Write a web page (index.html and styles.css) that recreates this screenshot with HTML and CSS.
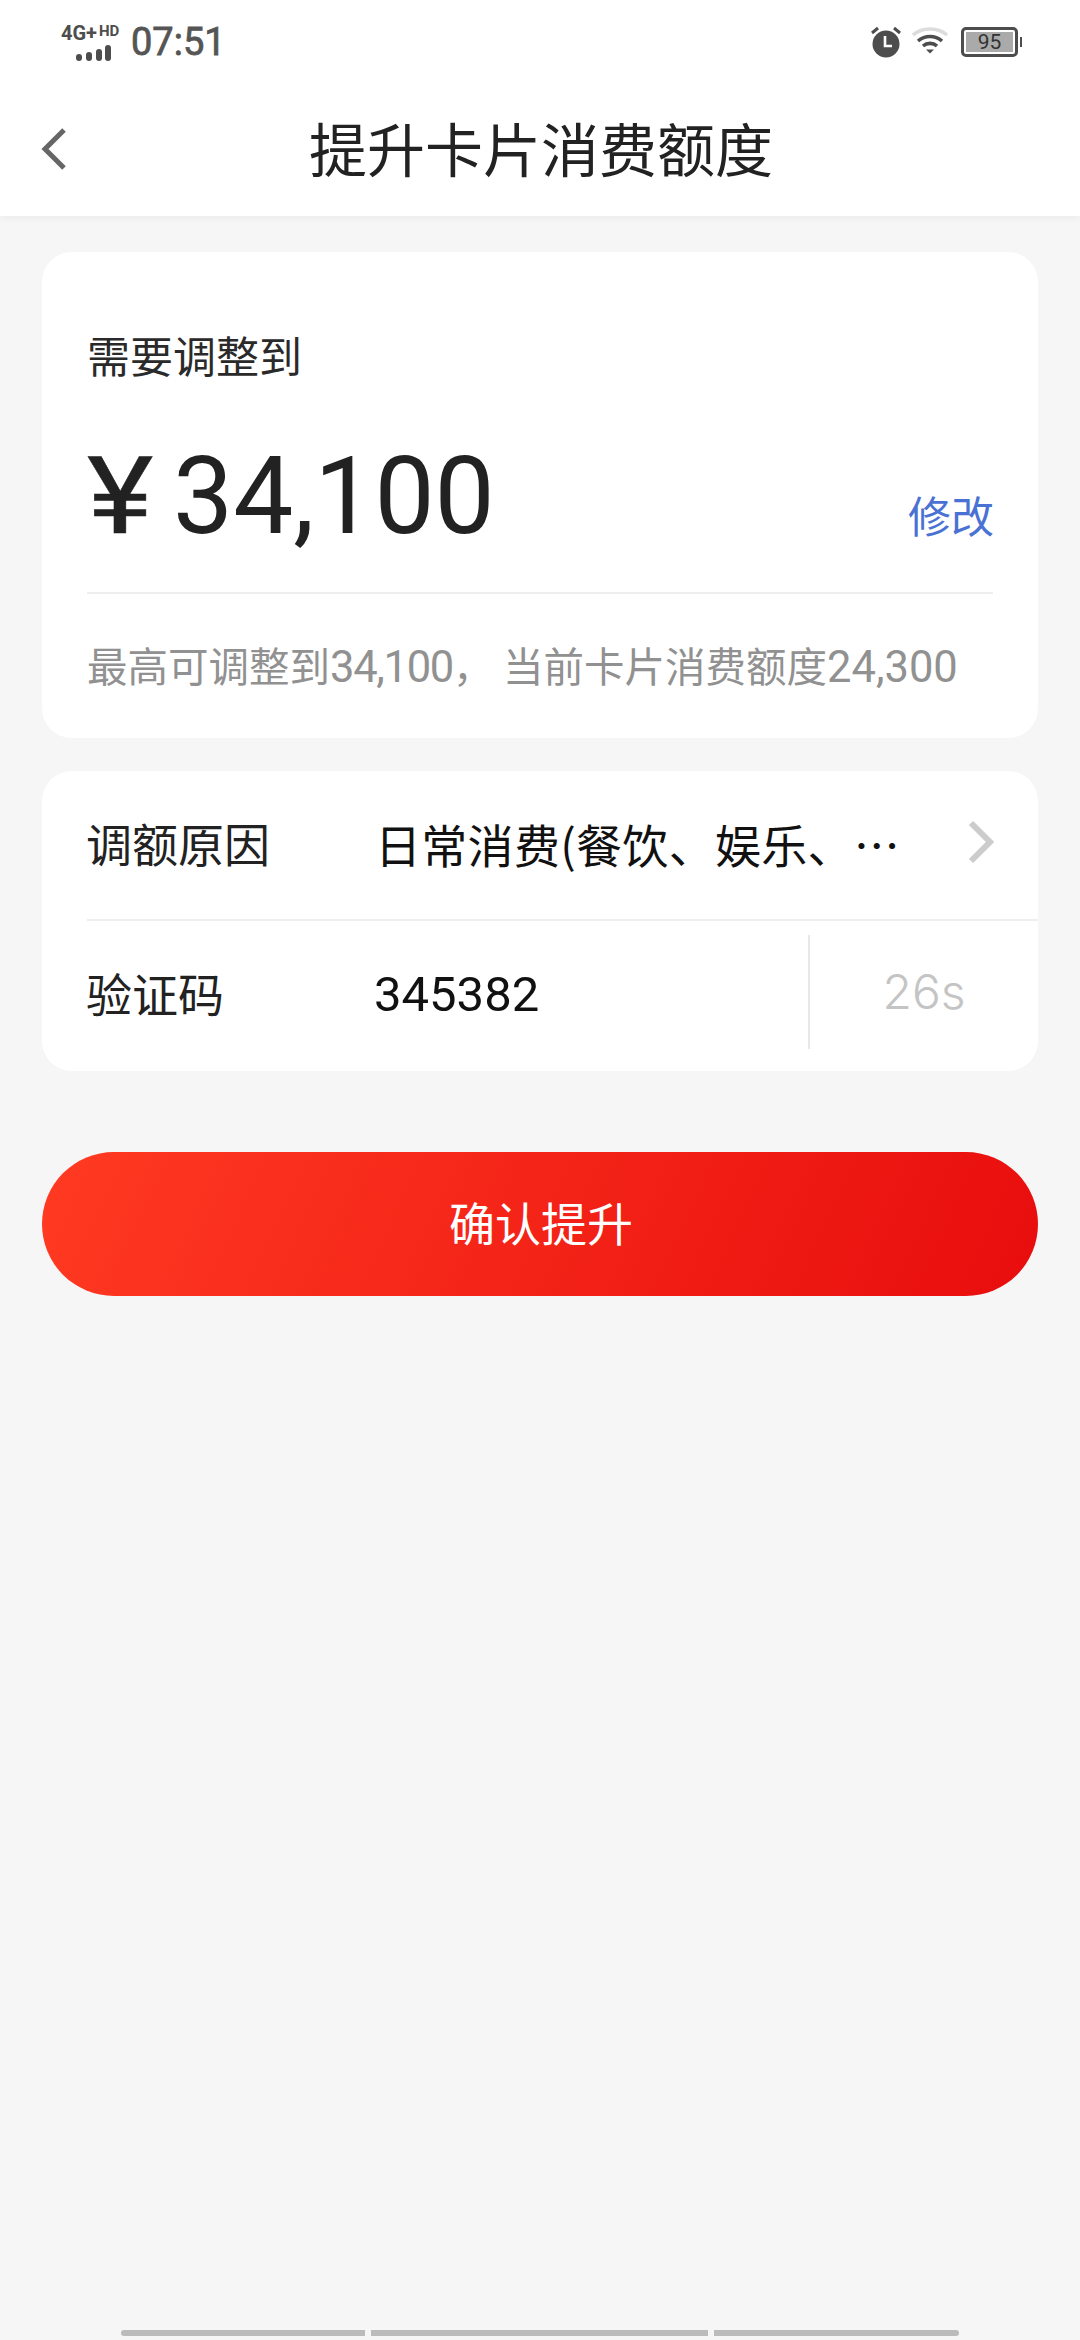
FILE: index.html
```html
<!DOCTYPE html>
<html lang="zh-CN">
<head>
<meta charset="utf-8">
<title>提升卡片消费额度</title>
<link rel="stylesheet" href="styles.css">
</head>
<body>
<header class="top">
  <div class="status">
    <div class="status-left">
      <div class="net">
        <div class="net-text"><span class="net-4g">4G+</span><span class="net-hd">HD</span></div>
        <svg class="signal" width="36" height="16" viewBox="0 0 36 16"><rect x="0" y="9" width="6" height="7" rx="3"/><rect x="10" y="7" width="6" height="9" rx="3"/><rect x="20" y="4" width="6" height="12" rx="3"/><rect x="29" y="0" width="6" height="16" rx="3"/></svg>
      </div>
      <span class="time">07:51</span>
    </div>
    <div class="status-right">
      <svg class="alarm" width="32" height="32" viewBox="0 0 32 32"><circle cx="16" cy="18" r="13.500" fill="#4d4d4d"/><path d="M2 7l6-5M30 7l-6-5" stroke="#4d4d4d" stroke-width="3" fill="none"/><path d="M15 10v10h7" stroke="#fff" stroke-width="2.600" fill="none"/></svg>
      <svg class="wifi" width="36" height="28" viewBox="0 0 36 28"><path d="M1 9C10 1 26 1 35 9" stroke="#dcdcdc" stroke-width="3.400" fill="none"/><path d="M6 15c7-6 17-6 24 0" stroke="#4d4d4d" stroke-width="3.600" fill="none"/><path d="M11 20c4-3.500 10-3.500 14 0" stroke="#4d4d4d" stroke-width="3.600" fill="none"/><path d="M14 23.500h8l-4 4z" fill="#4d4d4d"/></svg>
      <div class="battery"><div class="battery-body"><span class="battery-fill">95</span></div><span class="battery-tip"></span></div>
    </div>
  </div>
  <nav class="nav">
    <svg class="back" width="26" height="44" viewBox="0 0 26 44"><path d="M23 3L4 22l19 19" stroke="#666" stroke-width="5" fill="none"/></svg>
    <h1 class="title">提升卡片消费额度</h1>
  </nav>
</header>
<main class="content">
  <section class="card amount-card">
    <div class="label">需要调整到</div>
    <div class="amount-row">
      <div class="amount"><span class="yen">¥</span><span class="num">34,100</span></div>
      <a class="edit">修改</a>
    </div>
    <div class="hint">最高可调整到<span class="digits digits-tight">34,100</span><span class="comma">，</span><span class="rest">当前卡片消费额度<span class="digits">24,300</span></span></div>
  </section>
  <section class="card form-card">
    <div class="row row-reason">
      <span class="row-label">调额原因</span>
      <span class="row-value">日常消费(餐饮、娱乐、⋯</span>
      <svg class="chevron" width="28" height="44" viewBox="0 0 28 44"><path d="M4 3l19 19L4 41" stroke="#ccc" stroke-width="6" fill="none"/></svg>
    </div>
    <div class="row row-code">
      <span class="row-label">验证码</span>
      <span class="code">345382</span>
      <span class="timer">26s</span>
    </div>
  </section>
  <button class="submit">确认提升</button>
</main>
<footer class="gesture">
  <span class="bar bar-a"></span><span class="bar bar-b"></span><span class="bar bar-c"></span>
</footer>
</body>
</html>
```
FILE: styles.css
```css
* { box-sizing: border-box; }
html, body { margin: 0; padding: 0; }
body {
  width: 1080px;
  height: 2340px;
  background: #f6f6f6;
  font-family: Roboto, "Noto Sans CJK SC", sans-serif;
  color: #222;
  display: flex;
  flex-direction: column;
  overflow: hidden;
}
.top {
  height: 216px;
  background: #fff;
  box-shadow: 0 3px 6px rgba(0,0,0,.04);
}
.status {
  height: 84px;
  padding: 0 58px 0 63px;
  display: flex;
  justify-content: space-between;
  align-items: center;
}
.status-left { display: flex; align-items: center; gap: 10px; }
.net { width: 58px; display: flex; flex-direction: column; align-items: flex-end; }
.net-text { display: flex; align-items: flex-start; width: 60px; height: 18px; color: #4d4d4d; font-weight: 700; line-height: 18px; white-space: nowrap; flex: none; }
.net-4g { font-size: 20px; }
.net-hd { font-size: 15px; margin-left: 2px; line-height: 15px; }
.signal { fill: #4d4d4d; margin: 3px 9px 0 0; }
.time { font-size: 38px; font-weight: 400; color: #555; line-height: 44px; -webkit-text-stroke: .8px #555; }
.status-right { display: flex; align-items: center; gap: 10px; }
.wifi { margin-top: -4px; }
.battery { display: flex; align-items: center; gap: 2px; margin-left: 3px; }
.battery-body { width: 57px; height: 30px; border: 3px solid #4d4d4d; border-radius: 5px; padding: 2px; display: flex; }
.battery-fill { flex: 1; background: #aaa; color: #333; font-size: 21px; line-height: 20px; text-align: center; }
.battery-tip { width: 2px; height: 10px; background: #4d4d4d; }
.nav { height: 132px; display: flex; align-items: center; justify-content: center; position: relative; }
.back { position: absolute; left: 41px; top: 43px; }
.title { margin: 4px 0 0 2px; font-size: 58px; font-weight: 400; color: #222; line-height: 134px; }
.content { padding: 36px 42px 0; display: flex; flex-direction: column; }
.card { background: #fff; border-radius: 30px; }
.amount-card { height: 486px; padding: 76px 45px 0; }
.label { font-size: 43px; line-height: 60px; color: #2a2a2a; }
.amount-row { margin-top: 44px; height: 130px; display: flex; justify-content: space-between; align-items: center; }
.amount { display: flex; align-items: center; color: #222; font-size: 107px; line-height: 130px; gap: 24px; }
.yen { display: block; width: 62px; transform: scaleX(1.18); transform-origin: left center; -webkit-text-stroke: .5px #222; }
.num { display: block; }
.edit { font-size: 43px; line-height: 60px; color: #4a72d4; margin-top: 42px; margin-right: -1px; }
.hint { margin-top: 30px; border-top: 2px solid #eee; padding-top: 44px; font-size: 40.5px; line-height: 60px; color: #919191; white-space: nowrap; }
.digits { font-size: 43.5px; }
.digits-tight { letter-spacing: -1.3px; }
.comma { display: inline-block; font-size: 40px; width: 40px; }
.rest { margin-left: 10px; }
.form-card { margin-top: 33px; height: 300px; }
.row { margin-left: 45px; display: flex; align-items: center; }
.row-reason { height: 150px; border-bottom: 2px solid #eee; padding-top: 2px; }
.row-code { height: 150px; }
.row-label { width: 285px; flex: none; margin-left: -1px; padding-bottom: 9px; font-size: 46px; line-height: 60px; color: #222; font-family: "Noto Sans CJK SC", sans-serif; }
.row-value { flex: 1; margin-left: 4px; padding-bottom: 6px; font-size: 46px; letter-spacing: .3px; line-height: 60px; color: #111; white-space: nowrap; font-family: "Noto Sans CJK SC", sans-serif; }
.chevron { margin: -8px 43px 0 0; flex: none; }
.code { flex: 1; margin: -3px 0 0 3px; font-size: 49px; line-height: 60px; color: #111; }
.timer { width: 230px; height: 114px; margin-top: -8px; border-left: 2px solid #e8e8e8; text-align: center; font-size: 48px; line-height: 114px; color: #c4c4c4; font-family: Inter, Roboto, sans-serif; font-weight: 300; }
.submit {
  margin-top: 81px;
  height: 144px;
  border: 0;
  border-radius: 72px;
  background: linear-gradient(115deg, #ff3a22 0%, #e80d0d 100%);
  color: #fff;
  font-family: "Noto Sans CJK SC", sans-serif;
  font-size: 46px;
  padding: 0 0 6px 2px;
}
.gesture { margin-top: auto; height: 10px; padding-left: 121px; display: flex; gap: 6px; }
.bar { height: 6px; background: #bbb; display: block; }
.bar-a { width: 244px; border-radius: 3px 0 0 3px; }
.bar-b { width: 337px; }
.bar-c { width: 245px; border-radius: 0 3px 3px 0; }
```
